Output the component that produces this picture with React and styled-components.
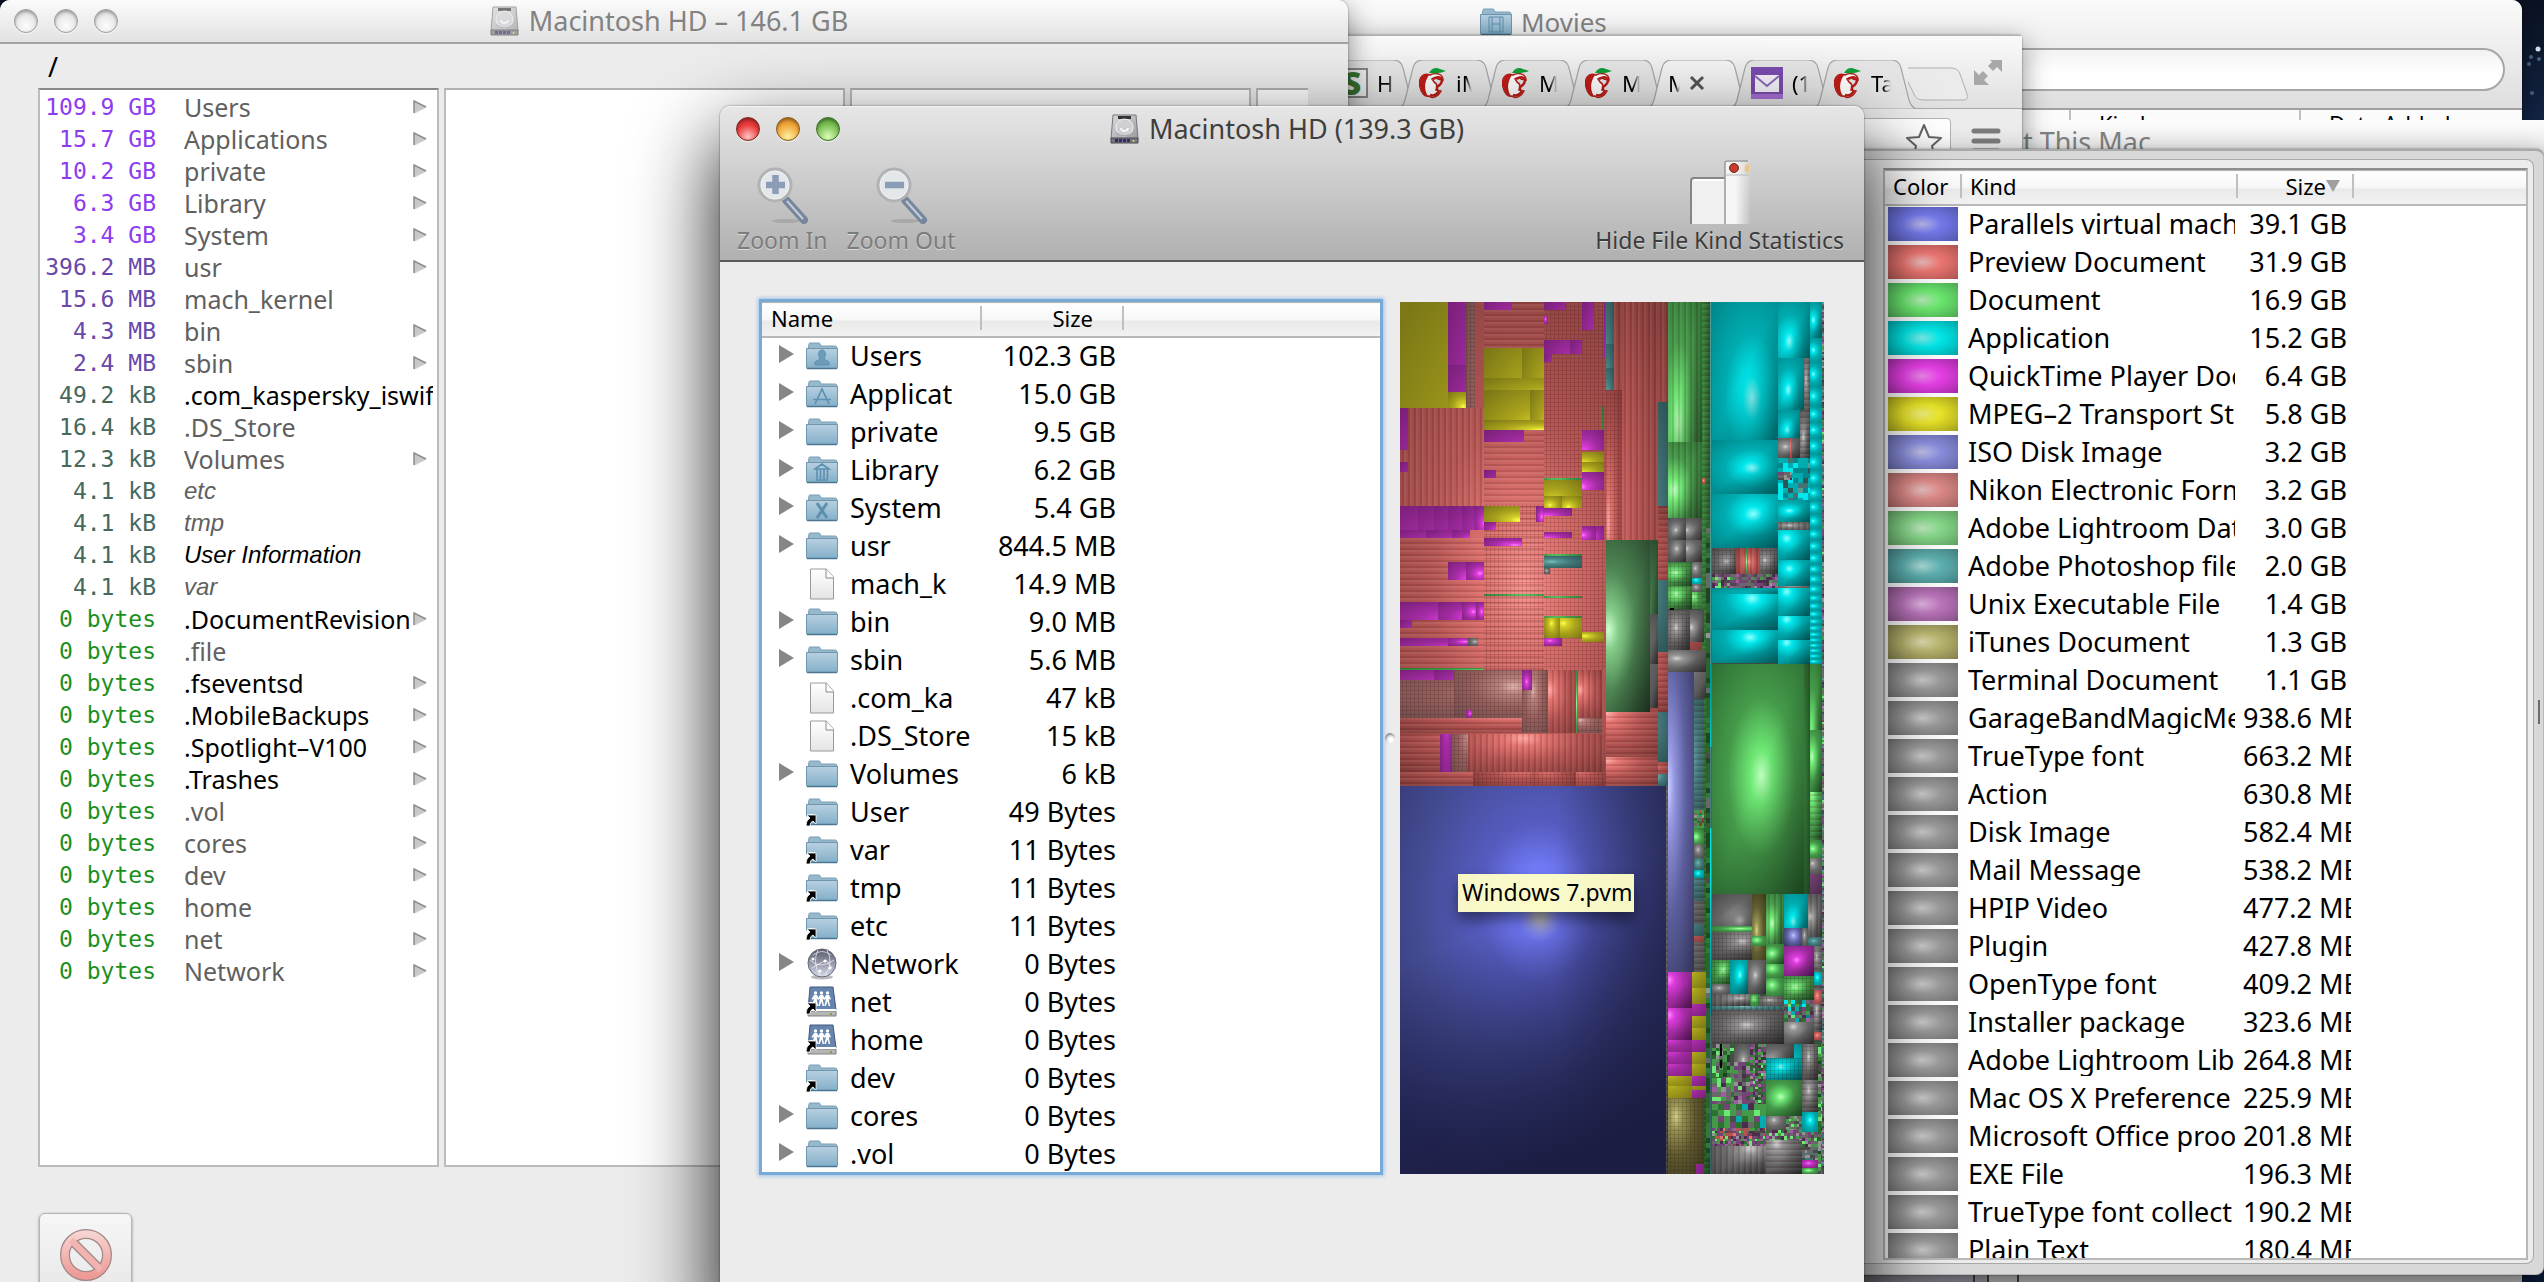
import React from "react";
import styled, { createGlobalStyle, css } from "styled-components";

const GlobalStyle = createGlobalStyle`
  * { box-sizing: border-box; }
  html, body { margin: 0; height: 100%; overflow: hidden; }
  body { font-family: "Noto Sans", "Open Sans", sans-serif; font-size: 24px; color: #000; }
  button, input { font: inherit; color: inherit; }
  button { border: 0; padding: 0; background: none; }
  svg { display: block; flex: none; }
`;

/* ---------- desktop and window frames ---------- */

const Desktop = styled.main`
  position: relative;
  height: 100vh;
  overflow: hidden;
  background: linear-gradient(#0a1222, #14284c 140px, #0c1c3c);
`;

const Stars = styled.svg`
  position: absolute;
  top: 0;
  right: 0;
`;

const Frame = styled.section`
  position: absolute;
  display: flex;
  flex-direction: column;
  border-radius: 10px 10px 0 0;
  background: #ececec;
  box-shadow: 0 8px 28px rgba(0, 0, 0, 0.45), 0 0 2px rgba(0, 0, 0, 0.5);
`;

const BrowserFrame = styled(Frame)`left: 0; top: 0; width: 1348px; height: 100%;`;
const MoviesFrame = styled(Frame)`left: 1200px; top: 0; width: 1322px; height: 100%; overflow: hidden;`;
const AboutFrame = styled(Frame)`left: 1700px; top: 120px; width: 900px; height: 900px; border-radius: 0; box-shadow: none;`;
const ChromeFrame = styled(Frame)`left: 1200px; top: 35px; width: 822px; height: 600px; border-radius: 4px; border-top: 1px solid #b4b4b4;`;
const DrawerFrame = styled(Frame)`
  left: 1840px;
  top: 149px;
  width: 704px;
  height: 1126px;
  padding: 8px 9px 10px 0;
  border-radius: 0 8px 8px 0;
  background: #d8d8d8;
  border: 1px solid #b8b8b8;
  border-top: 2px solid #a9a9a9;
`;
const MainFrame = styled(Frame)`
  left: 720px;
  top: 106px;
  width: 1144px;
  height: calc(100% - 66px);
  box-shadow: 0 34px 84px rgba(0, 0, 0, 0.95), 0 0 2px rgba(0, 0, 0, 0.6);
`;

const TitleBar = styled.header`
  display: flex;
  align-items: center;
  flex: none;
  height: 44px;
  padding: 0 ${(p) => (p.$active ? "16px" : "14px")};
  border-radius: 10px 10px 0 0;
  ${(p) => !p.$active && css`
    background: linear-gradient(#fbfbfb, #e2e2e2);
    border-bottom: 2px solid #a2a2a2;
  `}
`;

const Lights = styled.div`
  display: flex;
  gap: 16px;
  width: 120px;
`;

const Light = styled.button`
  width: 24px;
  height: 24px;
  border-radius: 50%;
  border: 1px solid ${(p) => p.$rim};
  background: ${(p) => p.$fill};
  box-shadow: inset 0 2px 3px rgba(0, 0, 0, 0.3), 0 1px 0 rgba(255, 255, 255, 0.6);
`;

const Title = styled.h1`
  display: flex;
  align-items: center;
  justify-content: center;
  gap: 10px;
  flex: 1;
  margin: 0 130px 0 0;
  font-size: 27px;
  line-height: 32px;
  font-weight: 400;
  white-space: pre;
  color: ${(p) => (p.$active ? "#3f3f3f" : "#828282")};
`;

/* ---------- column browser ---------- */

const PathLine = styled.div`
  padding: 7px 0 0 48px;
  height: 44px;
  line-height: 32px;
  font-size: 27px;
`;

const Columns = styled.div`
  display: flex;
  gap: 5px;
  width: 1270px;
  height: 1079px;
  margin-left: 38px;
  overflow: hidden;
  flex: none;
`;

const Column = styled.ul`
  flex: 0 0 401px;
  margin: 0;
  padding: 1px 0 0;
  list-style: none;
  background: #fff;
  border: 2px solid #bcbcbc;
  border-top-color: ${(p) => (p.$main ? "#8a8a8a" : "#b0b0b0")};
`;

const Entry = styled.li`
  display: grid;
  grid-template-columns: 116px 1fr 14px;
  column-gap: 28px;
  align-items: center;
  height: 32px;
  padding-right: 10px;
  line-height: 32px;
  white-space: nowrap;
`;

const EntrySize = styled.span`
  display: flex;
  justify-content: flex-end;
  font-family: "DejaVu Sans Mono", monospace;
  font-size: 23px;
  white-space: pre;
  color: ${(p) => ({ GB: "#8c3cf0", MB: "#6848a8", kB: "#44685c", bytes: "#1c901c" })[p.$unit]};
`;

const EntryName = styled.span`
  overflow: hidden;
  margin-right: ${(p) => (p.$wide ? "-48px" : "-26px")};
  font-size: 25px;
  color: ${(p) => (p.$dark ? "#000" : "#606060")};
  ${(p) => p.$link && css`
    font-family: "Liberation Sans", Arial, sans-serif;
    font-size: 24px;
    font-style: italic;
  `}
`;

const Footer = styled.div`
  padding: 46px 0 0 39px;
`;

const StopButton = styled.button`
  display: grid;
  justify-items: center;
  width: 93px;
  height: 90px;
  padding-top: 14px;
  border: 1px solid #b4b4b4;
  border-radius: 6px;
  background: linear-gradient(#f6f6f6, #e6e6e6);
  box-shadow: 0 1px 3px rgba(0, 0, 0, 0.4);
  align-items: start;
`;

/* ---------- main window ---------- */

const Chrome = styled.div`
  flex: none;
  height: 156px;
  border-radius: 10px 10px 0 0;
  border-top: 1px solid #f4f4f4;
  border-bottom: 2px solid #5a5a5a;
  background: linear-gradient(#e6e6e6, #b0b0b0);
`;

const ToolRow = styled.div`
  display: flex;
  align-items: flex-end;
  gap: 19px;
  padding: 9px 20px 0 17px;
`;

const Tool = styled.button`
  display: flex;
  flex-direction: column;
  align-items: center;
  gap: 3px;
  font-size: 23px;
  line-height: 26px;
  white-space: nowrap;
  color: ${(p) => (p.disabled ? "#7c7c7c" : "#3c3c3c")};
  text-shadow: 0 1px 0 rgba(255, 255, 255, 0.5);
  margin-left: ${(p) => (p.$end ? "auto" : "0")};
`;

const Body = styled.div`
  display: flex;
  padding: 40px 40px 0 42px;
`;

const TablePane = styled.div`
  flex: 1;
  min-width: 0;
  height: 870px;
  overflow: hidden;
  background: #fff;
  box-shadow: 0 0 0 3px #78aad8, 0 0 4px 4px #9cc2e6;
`;

const Splitter = styled.div`
  display: flex;
  align-items: center;
  justify-content: center;
  width: 20px;
`;

const Knob = styled.span`
  width: 10px;
  height: 10px;
  border-radius: 50%;
  background: #fff;
  box-shadow: inset 1px 2px 3px #888;
`;

const MapPane = styled.div`
  position: relative;
  width: 424px;
  height: 872px;
`;

const Tooltip = styled.div`
  position: absolute;
  left: 58px;
  top: 572px;
  width: 176px;
  height: 38px;
  padding-left: 4px;
  font-size: 23px;
  line-height: 36px;
  white-space: nowrap;
  background: rgba(255, 255, 200, 0.96);
  box-shadow: 0 8px 14px rgba(0, 0, 0, 0.45);
`;

const Table = styled.table`
  width: 100%;
  table-layout: fixed;
  border-collapse: collapse;
`;

const Head = styled.th`
  height: 34px;
  padding: 3px 0 0;
  vertical-align: top;
  font-size: 22px;
  line-height: 24px;
  font-weight: 400;
  text-align: left;
  background: linear-gradient(#fff 0, #f6f6f6 50%, #e9e9e9 52%, #f2f2f2);
  border-top: 1px solid #b4b4b4;
  border-bottom: 2px solid #b8b8b8;
`;

const HeadLabel = styled.span`
  display: flex;
  align-items: center;
  justify-content: ${(p) => (p.$end ? "flex-end" : "flex-start")};
  height: 24px;
  padding: ${(p) => p.$pad || "0"};
  border-right: ${(p) => (p.$last ? "0" : "2px solid #c0c0c0")};
`;

const Row = styled.tr`
  height: 38px;
`;

const Cell = styled.td`
  height: 38px;
  padding: ${(p) => p.$pad || "0"};
  overflow: hidden;
  white-space: nowrap;
  font-size: 27px;
  line-height: 32px;
  text-align: ${(p) => p.$align || "left"};
`;

const NameLine = styled.div`
  display: grid;
  grid-template-columns: 15px 32px 1fr;
  align-items: center;
  column-gap: 12px;
  padding-left: 17px;
`;

/* ---------- drawer ---------- */

const DrawerPanel = styled.div`
  flex: 1;
  min-height: 0;
  padding: 8px 5px 3px 42px;
  border: 1px solid #a8a8a8;
  border-left: 0;
  border-radius: 0 8px 8px 0;
  background: #ececec;
`;

const KindPane = styled.div`
  height: 100%;
  overflow: hidden;
  background: #fff;
  border: 2px solid #b8b8b8;
  border-top-color: #8e8e8e;
`;

const Swatch = styled.div`
  width: 70px;
  height: 34px;
  margin-left: 3px;
  background: radial-gradient(ellipse 60px 30px at 48% 50%, ${(p) => p.$c[0]}, ${(p) => p.$c[1]} 32%, ${(p) => p.$c[2]});
`;

const KindText = styled.div`
  margin: 0 3px 0 6px;
  overflow: hidden;
`;

const SizeText = styled.div`
  margin: 0 3px 0 5px;
  padding-right: 4px;
  overflow: hidden;
`;

const Grip = styled.span`
  position: absolute;
  right: 3px;
  top: 549px;
  width: 2px;
  height: 24px;
  background: #6c6c6c;
`;

/* ---------- background windows ---------- */

const FinderBar = styled.header`
  flex: none;
  height: 110px;
  background: linear-gradient(#fafafa, #dedede);
  border-bottom: 2px solid #a0a0a0;
`;

const FinderTitle = styled(Title)`
  justify-content: flex-start;
  gap: 9px;
  height: 48px;
  margin: 0;
  padding: 0 0 4px 280px;
  font-size: 26px;
`;

const SearchField = styled.input`
  display: block;
  width: 700px;
  height: 43px;
  margin-left: 605px;
  border: 2px solid #a6a6a6;
  border-radius: 22px;
  background: linear-gradient(#f2f2f2, #fff 60%);
`;

const FinderHeads = styled.div`
  display: grid;
  grid-template-columns: 869px 230px 1fr;
  height: 32px;
  background: #fbfbfb;
  font-size: 22px;
  line-height: 26px;
`;

const FinderHead = styled.span`
  padding-left: 28px;
  border-left: ${(p) => (p.$first ? "0" : "2px solid #c0c0c0")};
`;

const FinderBody = styled.div`
  display: grid;
  grid-template-columns: 775px 14px 30px 1fr;
  flex: 1;
  background: #b4b4b4;
`;

const FinderSide = styled.div`
  background: ${(p) => p.$tone};
  border-right: 2px solid #3c3c3c;
`;

const AboutTitle = styled(Title)`
  justify-content: flex-start;
  flex: none;
  height: 30px;
  margin: 0;
  padding: 14px 0 0 256px;
  background: linear-gradient(#fdfdfd, #ececec);
`;

const TabStrip = styled.div`
  display: flex;
  height: 73px;
  flex: none;
  padding: 24px 0 0 127px;
  background: linear-gradient(#fafafa, #e0e0e0);
  border-bottom: 1px solid #aaa;
`;

const Tab = styled.button`
  position: relative;
  display: flex;
  align-items: center;
  gap: 9px;
  flex: 0 0 83px;
  height: 49px;
  padding: 0 0 3px 9px;
  font-size: 22px;
`;

const TabShape = styled.svg`
  position: absolute;
  left: -12px;
  top: 0;
`;

const TabText = styled.span`
  position: relative;
  width: ${(p) => p.$w}px;
  overflow: hidden;
  white-space: nowrap;
  text-align: left;
  mask-image: linear-gradient(90deg, #000 60%, transparent);
`;

const Glyph = styled.span`
  position: relative;
`;

const SiteMark = styled.span`
  position: relative;
  display: grid;
  place-items: center;
  width: 32px;
  height: 30px;
  border: 2px solid #888;
  background: #f2f2f2;
  color: #3c7830;
  font-size: 32px;
  font-weight: 900;
  line-height: 26px;
`;

const UrlRow = styled.div`
  display: flex;
  align-items: center;
  gap: 20px;
  height: 56px;
  padding: 8px 20px 0 0;
  background: #ececec;
`;

const UrlBox = styled.div`
  display: flex;
  align-items: center;
  width: 751px;
  height: 46px;
  border: 1px solid #b4b4b4;
  border-radius: 4px;
  background: #fff;
  padding-right: 7px;
`;

const UrlInput = styled.input`
  flex: 1;
  border: 0;
  background: none;
`;

/* ---------- icons ---------- */

const DiskIcon = ({ faded }) => (
  <svg width="29" height="30" viewBox="0 0 29 30" opacity={faded ? 0.65 : 1}>
    <defs>
      <linearGradient id="metal" x1="0" y1="0" x2="1" y2="1">
        <stop offset="0" stopColor="#d8d8da" /><stop offset=".5" stopColor="#bcbcc0" /><stop offset="1" stopColor="#9a9a9e" />
      </linearGradient>
    </defs>
    <path d="M3 1h23l2 24H1z" fill="url(#metal)" stroke="#77777c" />
    <path d="M1 24h27v5H1z" fill="#77757f" stroke="#4b4a50" />
    <path d="M5 26.500h15" stroke="#302c68" strokeWidth="3" strokeDasharray="3 1" />
    <circle cx="23.500" cy="27" r="1" fill="#d8e040" />
    <path d="M8 3.500h13" stroke="#333" strokeWidth="3" />
    <circle cx="14.500" cy="13.500" r="8.500" fill="#cfcfd3" stroke="#f2f2f4" />
    <path d="M11 14a3.500 3 0 0 0 7 0" fill="none" stroke="#fff" strokeWidth="1.500" />
    <path d="M6 18c4 5 13 5 17 0" fill="none" stroke="#98989e" />
  </svg>
);

const StopIcon = () => (
  <svg width="54" height="54" viewBox="0 0 54 54">
    <defs>
      <linearGradient id="stop" x1="0" y1="0" x2="0" y2="1"><stop offset="0" stopColor="#f6d2d0" /><stop offset="1" stopColor="#ee9a96" /></linearGradient>
    </defs>
    <g fill="none">
      <circle cx="27" cy="27" r="21" stroke="#a08886" strokeWidth="10" />
      <path d="M12 12l30 30" stroke="#a08886" strokeWidth="9" />
      <circle cx="27" cy="27" r="21" stroke="url(#stop)" strokeWidth="7.500" />
      <path d="M12 12l30 30" stroke="#f2b4b0" strokeWidth="6.500" />
    </g>
  </svg>
);

const EntryArrow = () => (
  <svg width="14" height="14" viewBox="0 0 14 14"><path d="M13 7L1 13" stroke="#d8d8d8" strokeWidth="1.500" /><path d="M1 1v12L13 7z" fill="#c8c8c8" /><path d="M1 13V1l12 6" fill="none" stroke="#8c8c8c" strokeWidth="1.500" /></svg>
);

const Magnifier = ({ minus }) => (
  <svg width="56" height="58" viewBox="0 0 56 58">
    <ellipse cx="32" cy="55" rx="14" ry="2" fill="#a8a8a8" />
    <path d="M32 34L50 54" stroke="#76869c" strokeWidth="8" strokeLinecap="round" />
    <path d="M33 35L49 53" stroke="#c4ccd8" strokeWidth="2" />
    <circle cx="21" cy="19" r="16" fill="#f2f2f2" stroke="#b0b2b4" strokeWidth="3" />
    <circle cx="21" cy="19" r="13.500" fill="#e4e7ea" />
    <path d={minus ? "M12 19h19" : "M12 19h19M21.500 9v19"} stroke="#8b9cb6" strokeWidth="6.500" />
  </svg>
);

const PanelsIcon = () => (
  <svg width="62" height="64" viewBox="0 0 62 64">
    <defs>
      <linearGradient id="fade"><stop offset=".4" stopColor="#f6f6f6" /><stop offset="1" stopColor="#f6f6f6" stopOpacity="0" /></linearGradient>
    </defs>
    <path d="M2 19h34v45H2z" fill="#f0f0f0" />
    <path d="M2 64V21q0-3 3-3h31" fill="none" stroke="#858585" strokeWidth="2" />
    <path d="M5 20h31" stroke="#fff" strokeWidth="2" />
    <path d="M36 64V3q0-3 3-3h23v64z" fill="url(#fade)" />
    <path d="M36 64V3q0-2 3-2h20" fill="none" stroke="#989898" strokeWidth="1.500" />
    <path d="M36 15h24" stroke="#b8b8b8" />
    <circle cx="45" cy="8" r="4.500" fill="#c83c30" stroke="#702018" />
    <path d="M60 4a4.500 4.500 0 0 0 0 9" fill="#e8c890" />
  </svg>
);

const Badge = () => (
  <g><path d="M0 28V19q3-5 9-2v-1l-1 9-2-2q-3 1-4 5z" fill="#fff" /><path d="M0 28q0-6 4-8l-3-3h9v9l-3-3q-3 1-3 5z" fill="#000" stroke="#fff" strokeWidth=".8" /></g>
);

const RowIcon = ({ kind }) => {
  if (kind === "file") {
    return (
      <svg width="32" height="32" viewBox="0 0 32 32">
        <defs><linearGradient id="page" x1="0" y1="0" x2="0" y2="1"><stop offset="0" stopColor="#fff" /><stop offset="1" stopColor="#e4e4e4" /></linearGradient></defs>
        <path d="M4.500 1h16l7 8v22h-23z" fill="url(#page)" stroke="#9a9a9a" /><path d="M20 1v9h8" fill="#fff" stroke="#888" />
      </svg>
    );
  }
  if (kind === "globe") {
    return (
      <svg width="32" height="32" viewBox="0 0 32 32">
        <defs><linearGradient id="globe" x1="0" y1="0" x2="0" y2="1"><stop offset="0" stopColor="#55566a" /><stop offset="1" stopColor="#d6daea" /></linearGradient></defs>
        <ellipse cx="16" cy="29" rx="11" ry="2.500" fill="#bbb" />
        <circle cx="16" cy="15" r="14" fill="url(#globe)" stroke="#666878" />
        <path d="M7 7q9-7 18 0M4 12q10 10 24 0M12 2q-6 12 2 26M21 2q7 12-2 26M6 20l14-8 6 8" fill="none" stroke="#fff" opacity=".65" />
        <g fill="#fff"><circle cx="7" cy="11" r="1.500" /><circle cx="19" cy="13" r="1.500" /><circle cx="14" cy="23" r="1.500" /><circle cx="24" cy="20" r="1.500" /></g>
      </svg>
    );
  }
  if (kind === "server") {
    return (
      <svg width="32" height="32" viewBox="0 0 32 32">
        <path d="M4 1h23l3 23H2z" fill="#6684ae" stroke="#3e5880" /><path d="M2 25h28v5H2z" fill="#b6b6b6" stroke="#808080" /><path d="M2 24h28" stroke="#fff" strokeWidth="2" /><circle cx="25" cy="28" r="1" fill="#68a020" />
        <g fill="#fff">
          {[9.500, 15.500, 21.500].map((x) => (
            <g key={x}>
              <circle cx={x} cy="7" r="1.700" />
              <path d={`M${x - 1.500} 9h3l2 4-1 .800-1.200-1.500.200 2.700 1.200 5h-1.500L${x} 15.500l-1.700 4.500h-1.500l1.200-5 .200-2.700-1.200 1.500-1-.800z`} />
            </g>
          ))}
        </g>
        <Badge />
      </svg>
    );
  }
  const ink = { fill: "none", stroke: "#5d8fae", strokeWidth: 1.6 };
  return (
    <svg width="32" height="28" viewBox="0 0 32 28">
      <defs>
        <linearGradient id="folder" x1="0" y1="0" x2="0" y2="1"><stop offset="0" stopColor="#b8d0e0" /><stop offset="1" stopColor="#83afc9" /></linearGradient>
      </defs>
      <path d="M2 8L3 2q0-1 1-1h9q1 0 1 1l1 2h14q2 0 2 2v4H1z" fill="#96b9ce" stroke="#7b9eb4" />
      <path d="M.500 6.500h31v19q0 1-1 1h-29q-1 0-1-1z" fill="url(#folder)" stroke="#7096ae" />
      <path d="M1 26.500h30" stroke="#4a7692" strokeWidth="1.500" />
      {kind === "users" && <path d="M16 8c-3 0-4 3-3 6l1 3-5 3v3h14v-3l-5-3 1-3c1-3 0-6-3-6z" fill="#6c9cba" stroke="#5d8fae" />}
      {kind === "apps" && <path {...ink} d="M9 24l7-15 7 15M7 19.500h18" />}
      {kind === "library" && <path {...ink} d="M9 13l7-5 7 5zM10 24h12M11 13v10M14.500 13v10M18 13v10M21.500 13v10" />}
      {kind === "system" && <path {...ink} strokeWidth="3" d="M11 9l10 15M21 9L11 24" />}
      {kind === "movies" && <path {...ink} strokeWidth="1" d="M9 9h14v15H9zM12 9v15M20 9v15M12 16h8" />}
      {kind === "link" && <Badge />}
    </svg>
  );
};

const Disclosure = () => (
  <svg width="15" height="22" viewBox="0 0 15 22"><path d="M0 0v18L15 9z" fill="#868686" /></svg>
);

const AppleMark = () => (
  <svg width="28" height="32" viewBox="0 0 28 32">
    <path d="M11 8C3 5-1 12 1 20c1 6 5 10 9 9 3 3 9 1 12-5l-5-1q3-5-2-8l-2-3q5-3 6 0l5 1c0-6-7-8-13-5z" fill="#fff" stroke="#b81c18" strokeWidth="1.500" />
    <path d="M10 8C3 6 0 12 1 19c1 6 4 9 8 10-4-6-4-14 1-21z" fill="#c01c18" />
    <path d="M14 12q7-4 9 1 0 4-5 7v3" fill="none" stroke="#b81c18" strokeWidth="2.500" />
    <path d="M11 28q5 2 9-4" fill="none" stroke="#b81c18" strokeWidth="2.500" />
    <path d="M10 6q4-7 11-4l6 2q-7 3-15 2z" fill="#10a038" />
  </svg>
);

const MailMark = () => (
  <svg width="32" height="32" viewBox="0 0 32 32">
    <path d="M0 0h32v32H0z" fill="#7a4cae" /><path d="M0 27h32v5H0z" fill="#a870d8" />
    <path d="M4 8h24v17H4z" fill="#f6f4fa" /><path d="M4 9l12 10L28 9" fill="none" stroke="#8c68b8" strokeWidth="2" />
  </svg>
);

const TabBack = ({ active }) => (
  <TabShape width="108" height="49" viewBox="0 0 108 49">
    <path d="M0 49Q5 47 7 40L15 8q2-8 10-8h53q8 0 10 8l8 32q2 7 7 9z" fill={active ? "#f4f4f4" : "#e6e6e6"} stroke="#a8a8a8" strokeWidth="1.200" />
  </TabShape>
);

/* ---------- treemap ---------- */

const HUES = {
  red: ["#ffa8a4", "#e47470", "#b45452", "#823c3a"],
  mag: ["#ff84ff", "#dc3cdc", "#a42ca4", "#7c207c"],
  yel: ["#ffff50", "#d4d028", "#a8a21c", "#7c7816"],
  grn: ["#c0ffc0", "#6ee874", "#459a4a", "#2e7034"],
  sage: ["#d0ffd0", "#84cc88", "#4e8654", "#2e5032"],
  cyan: ["#90ffff", "#00e8ec", "#00acb0", "#00888c"],
  teal: ["#80c4c4", "#569a9a", "#427476", "#2e5456"],
  gry: ["#d4d4d4", "#949494", "#686868", "#4a4a4a"],
  rose: ["#e8b8b4", "#bc8480", "#96605e", "#74504e"],
  peri: ["#c8c8ff", "#9496e0", "#5e60a0", "#34365c"],
  kha: ["#d8d488", "#989454", "#605c30", "#3c3a1c"],
  pur: ["#d090d0", "#a05ca0", "#744474", "#4c2c4c"],
  dgn: ["#3c8840", "#347838", "#2c642e", "#1e4620"],
};

/* x, y, width, height, hue, highlight x, highlight y, texture */
const RED_BLOCK = [
  [30, 36, 144, 318, "yel", 500, 800], [174, 36, 54, 190, "mag", 300, 500], [174, 226, 54, 80, "mag", 300, 420], [174, 306, 54, 48, "yel", 220, 350],
  [228, 36, 30, 318, "rose", 290, 500, "g"], [30, 354, 24, 126, "mag", 200, 560], [30, 516, 24, 30, "mag", 100, 600],
  [282, 36, 84, 24, "mag", 390, 120], [282, 174, 114, 90, "yel", 460, 400], [396, 174, 66, 90, "yel", 480, 400], [282, 264, 180, 36, "yel", 480, 340],
  [282, 300, 138, 90, "yel", 460, 440], [420, 300, 42, 90, "yel", 480, 440], [282, 390, 180, 30, "yel", 450, 420],
  [282, 420, 120, 36, "mag", 440, 500], [282, 540, 36, 24, "mag", 350, 600],
  [462, 36, 66, 24, "mag", 560, 130], [462, 78, 12, 24, "mag"], [462, 150, 78, 42, "mag", 560, 260], [540, 150, 36, 42, "mag", 600, 260], [462, 192, 24, 24, "mag", 500, 260],
  [576, 36, 36, 84, "mag", 640, 200], [642, 36, 6, 168, "mag", 650, 330], [636, 348, 6, 70, "grn", 600, 500], [576, 420, 66, 60, "mag", 582, 490], [576, 486, 66, 30, "yel", 580, 520], [576, 516, 66, 30, "yel", 580, 550], [576, 546, 66, 54, "mag", 576, 590],
  [462, 564, 114, 6, "grn", 500, 567], [462, 570, 114, 48, "yel", 490, 650], [462, 618, 54, 36, "yel", 480, 645], [516, 618, 60, 36, "yel", 535, 650],
  [462, 654, 84, 24, "mag", 470, 680], [282, 648, 108, 48, "yel", 385, 690], [438, 648, 24, 48, "mag", 455, 680], [282, 696, 36, 24, "mag", 330, 720],
  [30, 648, 54, 72, "mag", 240, 760], [84, 648, 48, 72, "mag", 260, 760], [132, 648, 42, 72, "mag", 270, 760], [174, 648, 42, 72, "mag", 280, 760], [216, 648, 36, 72, "mag", 290, 740], [252, 648, 30, 72, "mag", 285, 700],
  [30, 720, 78, 24, "mag", 200, 760], [108, 720, 78, 24, "mag", 240, 760], [186, 720, 54, 24, "mag", 255, 750],
  [282, 744, 114, 24, "mag", 375, 765], [462, 726, 84, 18, "mag", 470, 745], [576, 708, 42, 42, "mag", 580, 735], [618, 708, 24, 42, "mag", 600, 740],
  [462, 792, 114, 6, "grn", 500, 795], [462, 798, 114, 36, "teal", 485, 815], [462, 834, 18, 18, "gry", 470, 842], [174, 816, 54, 54, "mag", 240, 870], [228, 816, 54, 54, "mag", 270, 850],
  [282, 912, 180, 6, "grn", 400, 915], [462, 918, 114, 6, "grn", 500, 921],
  [30, 936, 114, 54, "mag", 220, 990], [144, 936, 72, 54, "mag", 260, 980], [216, 936, 42, 54, "mag", 250, 965], [258, 936, 24, 54, "mag", 275, 965], [30, 990, 36, 24, "mag", 100, 1040],
  [462, 978, 114, 6, "grn", 500, 981], [462, 984, 48, 60, "yel", 485, 1000], [510, 984, 66, 60, "yel", 520, 1000], [576, 1026, 66, 30, "yel", 584, 1038], [462, 1044, 54, 24, "mag", 480, 1052],
  [30, 1044, 144, 24, "mag", 220, 1080], [174, 1044, 60, 24, "mag", 225, 1055], [234, 1044, 30, 24, "gry", 255, 1055], [30, 1134, 252, 5, "grn", 400, 1140],
  [30, 1170, 162, 114, "rose", 400, 1210, "g"], [192, 1140, 204, 144, "rose", 370, 1190, "g"], [30, 1140, 102, 30, "mag", 220, 1180], [132, 1140, 60, 30, "mag", 230, 1190],
  [396, 1140, 78, 190, "rose", 430, 1200, "g"], [396, 1140, 30, 60, "mag", 410, 1175], [474, 1140, 84, 190, "red", 480, 1200, "v"], [558, 1140, 6, 190, "grn", 560, 1240],
  [564, 1140, 72, 144, "red", 570, 1200, "v"], [564, 1284, 72, 46, "rose", 570, 1290, "g"], [30, 1284, 366, 46, "red", 380, 1270, "h"], [228, 1260, 18, 24, "mag", 240, 1270],
  [234, 1332, 410, 113, "red", 400, 1345, "v"], [30, 1332, 120, 113, "red", 300, 1300, "h"], [150, 1332, 36, 114, "mag", 170, 1200], [186, 1332, 48, 114, "rose", 240, 1340, "g"],
  [30, 1446, 220, 41, "red", 350, 1420, "h"], [250, 1446, 176, 41, "red", 390, 1430, "g"], [426, 1446, 132, 41, "red", 470, 1430, "g"], [558, 1446, 90, 41, "red", 570, 1430, "g"],
  [648, 300, 48, 450, "red", 655, 700, "g"], [696, 36, 108, 714, "red", 600, 700, "v"], [672, 36, 24, 264, "red", 600, 500, "v"],
  [648, 36, 24, 126, "teal", 650, 300], [648, 162, 24, 72, "teal", 650, 300], [648, 234, 24, 66, "teal", 650, 330],
  [648, 750, 132, 516, "sage", 656, 1020], [780, 750, 24, 222, "sage", 640, 1000], [780, 972, 24, 150, "gry", 700, 1040], [780, 1122, 24, 132, "gry", 700, 1100],
  [648, 1266, 156, 135, "red", 650, 1270, "h"], [648, 1401, 156, 86, "red", 650, 1410, "h"],
  [804, 36, 30, 300, "red", 700, 700, "v"], [804, 336, 30, 312, "teal", 760, 700], [804, 648, 30, 222, "red", 720, 800, "h"], [804, 870, 30, 216, "teal", 760, 900], [804, 1086, 30, 180, "red", 740, 1120, "h"], [804, 1266, 30, 150, "teal", 760, 1300], [804, 1416, 30, 36, "red", 780, 1430, "h"], [804, 1452, 30, 35, "teal", 800, 1460],
];

const RIGHT_BLOCK = [
  [936, 36, 24, 2616, "dgn", 940, 400, "h"], [828, 1488, 6, 1164, "gry", 800, 1700, "h"], [834, 36, 102, 420, "grn", 866, 400, "v"], [834, 456, 102, 228, "grn", 852, 600, "v"],
  [834, 684, 54, 66, "gry", 858, 720], [888, 684, 48, 66, "gry", 888, 720], [834, 750, 54, 66, "gry", 860, 776], [888, 750, 48, 66, "gry", 888, 776],
  [834, 816, 72, 72, "grn", 856, 848, "g"], [834, 888, 72, 68, "grn", 858, 912, "g"], [906, 816, 30, 48, "gry", 916, 835], [906, 864, 30, 18, "cyan", 918, 870], [906, 882, 30, 24, "gry"], [906, 906, 30, 50, "grn", 912, 920, "g"],
  [834, 960, 66, 120, "gry", 858, 1012, "g"], [900, 960, 42, 96, "gry", 904, 1012], [840, 954, 12, 6, "blk"], [900, 1056, 36, 24, "red", 860, 1000], [834, 1080, 114, 66, "gry", 860, 1105],
  [936, 564, 12, 18, "red"], [834, 1146, 78, 900, "peri", 836, 1490], [912, 1146, 42, 78, "gry", 890, 1100], [912, 1224, 30, 336, "teal", 900, 1400, "h"], [912, 1662, 30, 42, "gry"], [912, 1704, 30, 36, "teal"], [912, 1740, 30, 24, "cyan"], [912, 1764, 30, 70, "teal", 890, 1740, "h"], [912, 1834, 30, 68, "gry", 880, 1780, "h"],
  [912, 1614, 30, 48, "grn", 918, 1640], [912, 1902, 30, 36, "teal", 890, 1880], [912, 1938, 30, 18, "red", 890, 1920], [912, 1956, 30, 90, "gry", 880, 1880, "h"],
  [834, 2046, 72, 108, "mag", 838, 2070], [834, 2154, 72, 96, "mag", 838, 2175], [834, 2250, 72, 36, "mag", 838, 2235], [834, 2286, 72, 36, "mag", 838, 2270], [834, 2322, 72, 36, "mag", 838, 2300], [834, 2358, 72, 30, "yel", 838, 2330], [834, 2388, 72, 36, "yel", 838, 2350],
  ...[[2046, 48, "yel"], [2094, 48, "yel"], [2142, 36, "mag"], [2178, 36, "yel"], [2214, 36, "yel"], [2250, 36, "mag"], [2286, 36, "yel"], [2322, 36, "yel"], [2358, 30, "mag"], [2388, 12, "yel"], [2400, 24, "mag"]].map(([y, h, c]) => [906, y, 42, h, c, 880, y - 20]),
  [834, 2424, 108, 228, "kha", 858, 2480, "g"], [918, 2622, 24, 30, "mag", 880, 2560],
  [960, 36, 6, 2616, "teal", 960, 300], [960, 1122, 6, 250, "cyan", 960, 1500], [960, 1614, 6, 560, "cyan", 960, 1700],
  [966, 36, 198, 414, "cyan", 1086, 325], [966, 450, 198, 162, "cyan", 1086, 534], [966, 612, 198, 162, "cyan", 1090, 672],
  [966, 774, 72, 78, "gry", 1010, 815, "g"], [1038, 774, 72, 78, "red", 1074, 815, "v"], [1068, 774, 6, 78, "grn", 1070, 815], [1110, 774, 54, 78, "gry", 1125, 810, "g"], [966, 894, 198, 18, "cyan", 1086, 920],
  [966, 912, 198, 108, "cyan", 1086, 925], [966, 1020, 198, 100, "cyan", 1080, 1042],
  [1164, 36, 96, 168, "cyan", 1198, 155], [1164, 204, 78, 156, "cyan", 1195, 300], [1242, 204, 18, 156, "gry", 1248, 270, "h"], [1164, 360, 66, 84, "cyan", 1192, 420], [1230, 360, 30, 144, "gry", 1240, 440, "h"], [1164, 444, 66, 60, "gry", 1186, 470], [1200, 444, 6, 60, "red"],
  [1164, 630, 96, 66, "cyan", 1198, 662], [1164, 696, 96, 24, "gry", 1198, 706, "v"], [1164, 720, 96, 90, "cyan", 1190, 745], [1164, 810, 96, 78, "cyan", 1198, 836], [1164, 888, 96, 6, "gry"], [1164, 894, 96, 84, "cyan", 1190, 905], [1164, 978, 96, 72, "cyan", 1190, 988], [1164, 1050, 96, 72, "cyan", 1190, 1058],
  ...[[36, 108], [144, 72], [216, 72], [288, 60], [348, 48], [396, 48], [444, 48], [492, 48], [540, 48], [588, 42], [630, 42], [672, 42], [714, 36], [750, 36], [786, 36], [822, 30], [852, 30], [882, 30], [912, 24], [936, 24], [960, 24], [984, 20], [1004, 20], [1024, 18], [1042, 16], [1058, 16], [1074, 16], [1090, 16], [1106, 16]].map(([y, h]) => [1260, y, 36, h, "cyan", 1270, y + h / 2]),
  [966, 1122, 276, 690, "grn", 1115, 1460], [1242, 1122, 18, 690, "dgn", 1240, 1400], [1260, 1122, 36, 198, "grn", 1266, 1350], [1260, 1320, 36, 186, "grn", 1266, 1400], [1260, 1506, 36, 144, "grn", 1266, 1500, "h"], [1260, 1650, 36, 54, "grn", 1268, 1676], [1260, 1704, 36, 48, "gry", 1268, 1720], [1260, 1752, 36, 60, "pur", 1230, 1700],
  [966, 1812, 120, 96, "gry", 1050, 1892], [966, 1908, 120, 18, "grn", 1050, 1916], [966, 1926, 120, 84, "gry", 1058, 1955, "g"], [1086, 1812, 42, 198, "kha", 1100, 1920], [1086, 1938, 42, 30, "grn", 1100, 1950], [1128, 1812, 54, 150, "grn", 1146, 1900, "v"], [1128, 1962, 54, 60, "grn", 1146, 1990], [1128, 2022, 54, 42, "grn", 1146, 2035],
  [1182, 1812, 72, 102, "cyan", 1210, 1895], [1182, 1914, 54, 54, "peri", 1210, 1936], [1236, 1914, 18, 54, "gry"], [1254, 1812, 42, 130, "gry", 1262, 1880, "v"], [1254, 1942, 42, 26, "teal"], [1182, 1968, 90, 90, "mag", 1220, 2010], [1272, 1968, 24, 78, "gry", 1280, 2000, "h"], [1182, 2058, 90, 72, "grn", 1215, 2090, "g"], [1182, 2196, 90, 66, "gry", 1210, 2210],
  [1272, 2046, 24, 40, "cyan"], [1272, 2086, 24, 140, "gry", 1280, 2160, "h"], [1272, 2100, 24, 42, "red"], [1272, 2226, 24, 24, "red"],
  [966, 2010, 54, 72, "grn", 1000, 2040, "g"], [1020, 2010, 54, 102, "cyan", 1050, 2055], [1074, 2010, 54, 102, "gry", 1096, 2055], [1128, 2064, 54, 54, "grn", 1146, 2085], [966, 2082, 54, 30, "gry"], [966, 2112, 114, 36, "gry", 1050, 2125, "v"], [1080, 2112, 30, 36, "grn", 0, 0, "g"], [1110, 2118, 72, 30, "gry", 0, 0, "g"], [966, 2148, 216, 12, "teal", 1060, 2150, "v"], [966, 2160, 216, 102, "gry", 1070, 2205, "g"],
  [1032, 2262, 48, 54, "gry", 1060, 2310], [1128, 2262, 84, 42, "gry", 1150, 2310], [1212, 2262, 24, 42, "cyan", 1190, 2310], [1128, 2304, 108, 66, "cyan", 1172, 2330, "g"], [1128, 2370, 108, 108, "grn", 1172, 2420], [1128, 2478, 60, 42, "gry", 1152, 2490], [1128, 2550, 108, 102, "gry", 1160, 2560, "h"], [966, 2568, 162, 84, "gry", 1080, 2575, "v"],
  [1236, 2262, 48, 108, "gry", 1256, 2300, "g"], [1236, 2370, 48, 96, "gry", 1256, 2400, "h"], [1236, 2466, 48, 60, "cyan", 1260, 2490], [1236, 2610, 48, 24, "mag"], [1236, 2634, 48, 18, "grn"],
];

/* areas crowded with very small files: x, y, width, height, step, hues */
const CROWDED = [
  [966, 852, 198, 42, 9, ["pur", "gry", "grn", "pur", "gry"]],
  [1164, 504, 96, 126, 15, ["cyan", "cyan", "cyan", "cyan", "cyan", "cyan", "teal"]],
  [1164, 546, 42, 24, 9, ["pur", "gry"]],
  [1296, 36, 6, 2616, 6, ["gry", "grn", "pur", "gry", "teal"]],
  [948, 700, 12, 1900, 15, ["dgn", "dgn", "dgn", "gry", "dgn", "dgn"]],
  [912, 1560, 30, 54, 8, ["grn", "gry", "red", "grn"]],
  [1182, 2130, 90, 66, 11, ["pur", "cyan", "grn", "gry", "gry"]],
  [966, 2262, 66, 102, 11, ["grn", "grn", "dgn", "gry"]],
  [1032, 2316, 48, 90, 12, ["pur", "gry", "grn", "pur"]],
  [1080, 2262, 48, 180, 8, ["pur", "grn", "gry", "pur", "dgn"]],
  [966, 2364, 66, 78, 14, ["grn", "grn", "gry", "pur"]],
  [1032, 2406, 48, 36, 12, ["pur", "gry", "pur"]],
  [966, 2442, 162, 72, 18, ["grn", "gry", "pur", "grn", "grn", "pur", "cyan"]],
  [966, 2514, 162, 54, 8, ["pur", "pur", "grn", "gry", "red"]],
  [1188, 2478, 48, 42, 8, ["gry", "grn", "gry"]],
  [1128, 2520, 108, 30, 9, ["grn", "grn", "gry", "pur"]],
  [1236, 2526, 48, 46, 9, ["pur", "pur", "gry", "grn"]],
  [1236, 2572, 48, 38, 8, ["gry", "gry", "teal"]],
  [1284, 2262, 12, 390, 10, ["grn", "gry", "grn", "dgn"]],
];

const crowd = () => {
  let seed = 7;
  const next = () => {
    seed = (seed * 16807) % 2147483647;
    return seed / 2147483647;
  };
  const out = [];
  CROWDED.forEach(([x, y, w, h, step, hues]) => {
    for (let j = 0; j < h; j += step) {
      for (let i = 0; i < w; i += step) {
        const hue = HUES[hues[Math.floor(next() * hues.length)]];
        const shade = next();
        out.push([x + i, y + j, Math.min(step, w - i), Math.min(step, h - j), hue[shade < 0.2 ? 1 : shade < 0.75 ? 2 : 3]]);
      }
    }
  });
  return out;
};
const CROWD = crowd();

const MapCell = ({ id, cell }) => {
  const [x, y, w, h, hue, hx, hy, tex] = cell;
  if (hue === "blk") return <rect x={x} y={y} width={w} height={h} fill="#000" />;
  const cx = hx || x + w * 0.4;
  const cy = hy || y + h * 0.4;
  const dx = Math.max(Math.abs(cx - x), Math.abs(x + w - cx)) * 1.35;
  const dy = Math.max(Math.abs(cy - y), Math.abs(y + h - cy)) * 1.35;
  const c = HUES[hue];
  const shaded = ["grn", "cyan", "gry", "sage", "mag"].includes(hue) && w * h > 3000 && x > 640;
  return (
    <g>
      <radialGradient id={id} gradientUnits="userSpaceOnUse" cx="0" cy="0" r="1" gradientTransform={`translate(${cx} ${cy}) scale(${dx} ${dy})`}>
        <stop offset="0" stopColor={c[0]} /><stop offset=".17" stopColor={c[1]} /><stop offset=".5" stopColor={c[2]} /><stop offset="1" stopColor={c[3]} />
      </radialGradient>
      <rect x={x} y={y} width={w} height={h} fill={`url(#${id})`} />
      {shaded && <rect x={x} y={y} width={w} height={h} fill="url(#cell-shade)" />}
      {tex && <rect x={x} y={y} width={w} height={h} fill={`url(#tex-${tex})`} />}
    </g>
  );
};

const Treemap = () => (
  <svg width="424" height="872" viewBox="30 36 1272 2616" shapeRendering="crispEdges" role="img" aria-label="Disk usage map">
    <defs>
      <linearGradient id="cell-shade" x1="0" y1="0" x2="1" y2="1"><stop offset=".5" stopColor="#000" stopOpacity="0" /><stop offset="1" stopColor="#000" stopOpacity=".42" /></linearGradient>
      <pattern id="tex-v" width="18" height="40" patternUnits="userSpaceOnUse"><path d="M0 0h6v40H0z" fill="#300" opacity=".13" /><path d="M6 0h6v40H6z" fill="#fff" opacity=".05" /></pattern>
      <pattern id="tex-h" width="40" height="18" patternUnits="userSpaceOnUse"><path d="M0 0h40v6H0z" fill="#300" opacity=".13" /><path d="M0 6h40v6H0z" fill="#fff" opacity=".05" /></pattern>
      <pattern id="tex-g" width="12" height="12" patternUnits="userSpaceOnUse"><path d="M0 0h12v3H0zM0 0h3v12H0z" fill="#200" opacity=".16" /></pattern>
      <radialGradient id="red-base" gradientUnits="userSpaceOnUse" cx="0" cy="0" r="1" gradientTransform="translate(400 880) scale(460 860)">
        <stop offset="0" stopColor="#fc9490" /><stop offset=".25" stopColor="#e07470" /><stop offset=".6" stopColor="#b45654" /><stop offset="1" stopColor="#964846" />
      </radialGradient>
      <radialGradient id="vm" gradientUnits="userSpaceOnUse" cx="0" cy="0" r="1" gradientTransform="translate(445 1840) scale(620 860)">
        <stop offset="0" stopColor="#8088ff" /><stop offset=".12" stopColor="#727af8" /><stop offset=".28" stopColor="#565cc0" /><stop offset=".6" stopColor="#434a90" /><stop offset="1" stopColor="#2c3066" />
      </radialGradient>
      <linearGradient id="vm-shade" gradientUnits="userSpaceOnUse" x1="360" y1="1880" x2="660" y2="2540">
        <stop offset="0" stopColor="#14163a" stopOpacity="0" /><stop offset="1" stopColor="#191b3e" stopOpacity=".9" />
      </linearGradient>
      <linearGradient id="vm-side" gradientUnits="userSpaceOnUse" x1="500" y1="0" x2="828" y2="0">
        <stop offset="0" stopColor="#1c1e42" stopOpacity="0" /><stop offset="1" stopColor="#1c1e42" stopOpacity=".6" />
      </linearGradient>
      <radialGradient id="vm-spot"><stop offset=".2" stopColor="#b0b0b0" stopOpacity=".9" /><stop offset="1" stopColor="#8c90e0" stopOpacity="0" /></radialGradient>
    </defs>
    <rect x="30" y="36" width="1272" height="2616" fill="#3c4c3e" />
    <rect x="30" y="36" width="804" height="1451" fill="url(#red-base)" />
    <rect x="30" y="354" width="252" height="294" fill="url(#tex-v)" />
    <rect x="30" y="744" width="252" height="390" fill="url(#tex-h)" />
    <rect x="282" y="36" width="180" height="1104" fill="url(#tex-h)" />
    <rect x="282" y="640" width="180" height="500" fill="url(#tex-g)" />
    <rect x="462" y="36" width="186" height="1104" fill="url(#tex-g)" />
    {RED_BLOCK.map((c, i) => <MapCell key={i} id={`r${i}`} cell={c} />)}
    <rect x="30" y="1488" width="798" height="1164" fill="url(#vm)" />
    <rect x="30" y="1488" width="798" height="1164" fill="url(#vm-shade)" />
    <rect x="30" y="1488" width="798" height="1164" fill="url(#vm-side)" />
    <ellipse cx="450" cy="1880" rx="66" ry="76" fill="url(#vm-spot)" />
    {RIGHT_BLOCK.map((c, i) => <MapCell key={i} id={`b${i}`} cell={c} />)}
    {CROWD.map(([x, y, w, h, fill], i) => <rect key={i} x={x} y={y} width={w} height={h} fill={fill} />)}
    <path d="M990 2262h6v36h-6zM990 2310h6v24h-6z" fill="#000" />
  </svg>
);

/* ---------- data ---------- */

const ENTRIES = [
  ["109.9 GB", "Users", "a"], ["15.7 GB", "Applications", "a"], ["10.2 GB", "private", "a"], ["6.3 GB", "Library", "a"], ["3.4 GB", "System", "a"],
  ["396.2 MB", "usr", "a"], ["15.6 MB", "mach_kernel", ""], ["4.3 MB", "bin", "a"], ["2.4 MB", "sbin", "a"],
  ["49.2 kB", ".com_kaspersky_iswif", "d"], ["16.4 kB", ".DS_Store", ""], ["12.3 kB", "Volumes", "a"],
  ["4.1 kB", "etc", "i"], ["4.1 kB", "tmp", "i"], ["4.1 kB", "User Information", "id"], ["4.1 kB", "var", "i"],
  ["0 bytes", ".DocumentRevision", "ad"], ["0 bytes", ".file", ""], ["0 bytes", ".fseventsd", "ad"], ["0 bytes", ".MobileBackups", "ad"],
  ["0 bytes", ".Spotlight–V100", "ad"], ["0 bytes", ".Trashes", "ad"], ["0 bytes", ".vol", "a"], ["0 bytes", "cores", "a"],
  ["0 bytes", "dev", "a"], ["0 bytes", "home", "a"], ["0 bytes", "net", "a"], ["0 bytes", "Network", "a"],
];

const FILES = [
  ["Users", "102.3 GB", "users", 1], ["Applicat", "15.0 GB", "apps", 1], ["private", "9.5 GB", "folder", 1], ["Library", "6.2 GB", "library", 1],
  ["System", "5.4 GB", "system", 1], ["usr", "844.5 MB", "folder", 1], ["mach_k", "14.9 MB", "file"], ["bin", "9.0 MB", "folder", 1],
  ["sbin", "5.6 MB", "folder", 1], [".com_ka", "47 kB", "file"], [".DS_Store", "15 kB", "file"], ["Volumes", "6 kB", "folder", 1],
  ["User", "49 Bytes", "link"], ["var", "11 Bytes", "link"], ["tmp", "11 Bytes", "link"], ["etc", "11 Bytes", "link"],
  ["Network", "0 Bytes", "globe", 1], ["net", "0 Bytes", "server"], ["home", "0 Bytes", "server"], ["dev", "0 Bytes", "link"],
  ["cores", "0 Bytes", "folder", 1], [".vol", "0 Bytes", "folder", 1],
];

const GREY = ["#cfcfcf", "#9c9c9c", "#626262"];
const KINDS = [
  ["Parallels virtual mach", "39.1 GB", ["#bcbcf0", "#767cf0", "#484c98"]],
  ["Preview Document", "31.9 GB", ["#f0c0c0", "#f07874", "#964844"]],
  ["Document", "16.9 GB", ["#bcf0bc", "#6cec70", "#449048"]],
  ["Application", "15.2 GB", ["#80f4f0", "#00ecec", "#008c90"]],
  ["QuickTime Player Doc", "6.4 GB", ["#f08cf0", "#ec40ec", "#8a248c"]],
  ["MPEG–2 Transport St", "5.8 GB", ["#f6f480", "#ece828", "#8a8618"]],
  ["ISO Disk Image", "3.2 GB", ["#c4c4ec", "#8c90e0", "#54568e"]],
  ["Nikon Electronic Form", "3.2 GB", ["#ecc4c4", "#e08c8a", "#8e5654"]],
  ["Adobe Lightroom Dat", "3.0 GB", ["#c4ecc4", "#88dc8c", "#548a56"]],
  ["Adobe Photoshop file", "2.0 GB", ["#b0e0de", "#60b4b4", "#386e70"]],
  ["Unix Executable File", "1.4 GB", ["#e4b8e4", "#c078c0", "#704472"]],
  ["iTunes Document", "1.3 GB", ["#e2e0b4", "#bcb870", "#706c40"]],
  ["Terminal Document", "1.1 GB", GREY], ["GarageBandMagicMen", "938.6 MB", GREY], ["TrueType font", "663.2 MB", GREY],
  ["Action", "630.8 MB", GREY], ["Disk Image", "582.4 MB", GREY], ["Mail Message", "538.2 MB", GREY], ["HPIP Video", "477.2 MB", GREY],
  ["Plugin", "427.8 MB", GREY], ["OpenType font", "409.2 MB", GREY], ["Installer package", "323.6 MB", GREY],
  ["Adobe Lightroom Lib", "264.8 MB", GREY], ["Mac OS X Preference", "225.9 MB", GREY], ["Microsoft Office proo", "201.8 MB", GREY],
  ["EXE File", "196.3 MB", GREY], ["TrueType font collect", "190.2 MB", GREY], ["Plain Text", "180.4 MB", GREY],
];

const CLEAR = "radial-gradient(circle at 50% 70%, #fdfdfd, #d4d4d4)";
const ACTIVE = [
  ["Close", "radial-gradient(circle at 50% 85%, #ffc4c0, #e83c3c 55%, #c02828)", "#7c2420"],
  ["Minimize", "radial-gradient(circle at 50% 85%, #fff0a0, #f0a83c 55%, #c87820)", "#855a18"],
  ["Zoom", "radial-gradient(circle at 50% 85%, #d8ffb8, #7cc054 55%, #4c9430)", "#3c6c24"],
];

/* ---------- windows ---------- */

const WindowLights = ({ active }) => (
  <Lights>
    {ACTIVE.map(([name, fill, rim]) => (
      <Light key={name} aria-label={name} $fill={active ? fill : CLEAR} $rim={active ? rim : "#9c9c9c"} />
    ))}
  </Lights>
);

const ColumnBrowser = () => (
  <BrowserFrame>
    <TitleBar>
      <WindowLights />
      <Title><DiskIcon faded />Macintosh HD – 146.1 GB</Title>
    </TitleBar>
    <div>
      <PathLine>/</PathLine>
      <Columns>
        <Column $main>
          {ENTRIES.map(([size, name, flags]) => (
            <Entry key={name}>
              <EntrySize $unit={size.split(" ")[1]}>{size}</EntrySize>
              <EntryName $dark={flags.includes("d")} $link={flags.includes("i")} $wide={!flags.includes("a")}>{name}</EntryName>
              {flags.includes("a") && <EntryArrow />}
            </Entry>
          ))}
        </Column>
        <Column /><Column /><Column />
      </Columns>
      <Footer><StopButton aria-label="Delete"><StopIcon /></StopButton></Footer>
    </div>
  </BrowserFrame>
);

const InventoryWindow = () => (
  <MainFrame>
    <Chrome>
      <TitleBar $active>
        <WindowLights active />
        <Title $active><DiskIcon />Macintosh HD (139.3 GB)</Title>
      </TitleBar>
      <ToolRow>
        <Tool disabled><Magnifier />Zoom In</Tool>
        <Tool disabled><Magnifier minus />Zoom Out</Tool>
        <Tool $end><PanelsIcon />Hide File Kind Statistics</Tool>
      </ToolRow>
    </Chrome>
    <Body>
      <TablePane>
        <Table>
          <colgroup><col width="220" /><col width="142" /><col /></colgroup>
          <thead>
            <tr>
              <Head><HeadLabel $pad="0 0 0 9px">Name</HeadLabel></Head>
              <Head><HeadLabel $end $pad="0 29px 0 0">Size</HeadLabel></Head>
              <Head><HeadLabel $last /></Head>
            </tr>
          </thead>
          <tbody>
            {FILES.map(([name, size, icon, open]) => (
              <Row key={name}>
                <Cell><NameLine>{open ? <Disclosure /> : <span />}<RowIcon kind={icon} /><span>{name}</span></NameLine></Cell>
                <Cell $align="right" $pad="0 8px 0 0">{size}</Cell>
                <Cell />
              </Row>
            ))}
          </tbody>
        </Table>
      </TablePane>
      <Splitter><Knob /></Splitter>
      <MapPane><Treemap /><Tooltip role="tooltip">Windows 7.pvm</Tooltip></MapPane>
    </Body>
  </MainFrame>
);

const KindDrawer = () => (
  <DrawerFrame>
    <DrawerPanel>
      <KindPane>
        <Table>
          <colgroup><col width="77" /><col width="276" /><col width="116" /><col /></colgroup>
          <thead>
            <tr>
              <Head><HeadLabel $pad="0 0 0 8px">Color</HeadLabel></Head>
              <Head><HeadLabel $pad="0 0 0 8px">Kind</HeadLabel></Head>
              <Head><HeadLabel $end $pad="0 12px 0 0">Size<svg width="14" height="12" viewBox="0 0 14 12"><path d="M0 0h14L7 12z" fill="#a0a0a0" /></svg></HeadLabel></Head>
              <Head><HeadLabel $last /></Head>
            </tr>
          </thead>
          <tbody>
            {KINDS.map(([kind, size, colors]) => (
              <Row key={kind}>
                <Cell><Swatch $c={colors} /></Cell>
                <Cell><KindText>{kind}</KindText></Cell>
                <Cell $align="right"><SizeText>{size}</SizeText></Cell>
                <Cell />
              </Row>
            ))}
          </tbody>
        </Table>
      </KindPane>
    </DrawerPanel>
    <Grip />
  </DrawerFrame>
);

const MoviesWindow = () => (
  <MoviesFrame>
    <FinderBar>
      <FinderTitle><RowIcon kind="movies" />Movies</FinderTitle>
      <SearchField aria-label="Search" />
    </FinderBar>
    <FinderHeads><FinderHead $first /><FinderHead>Kind</FinderHead><FinderHead>Date Added</FinderHead></FinderHeads>
    <FinderBody><FinderSide $tone="#8e909a" /><FinderSide $tone="#8e909a" /><FinderSide $tone="#b0b0b0" /></FinderBody>
  </MoviesFrame>
);

const TABS = [["apple", "iM", 16], ["apple", "M", 18], ["apple", "M", 18], ["active", "M", 12], ["mail", "(1", 16], ["apple", "Ta", 20]];

const ChromeWindow = () => (
  <ChromeFrame>
    <TabStrip>
      <Tab><TabBack /><SiteMark>S</SiteMark><TabText $w={18}>H</TabText></Tab>
      {TABS.map(([mark, text, w], i) => (
        <Tab key={i}>
          <TabBack active={mark === "active"} />
          {mark === "apple" && <Glyph><AppleMark /></Glyph>}
          {mark === "mail" && <Glyph><MailMark /></Glyph>}
          <TabText $w={w}>{text}</TabText>
          {mark === "active" && <Glyph><svg width="16" height="16" viewBox="0 0 16 16"><path d="M2 2l12 12M14 2L2 14" stroke="#555" strokeWidth="3" /></svg></Glyph>}
        </Tab>
      ))}
      <svg width="110" height="49" viewBox="0 0 110 49">
        <path d="M0 14q-3-6 3-6h44q7 0 9 6l7 20q2 6-4 6H20q-8 0-10-6z" transform="translate(-4 0)" fill="#ebebeb" stroke="#b0b0b0" />
        <g transform="translate(66 -4)" fill="#a8a8a8"><path d="M28 1v15l-5-5-4 4-5-5 4-4-5-5z" /><path d="M0 29V14l5 5 4-4 5 5-4 4 5 5z" /></g>
      </svg>
    </TabStrip>
    <UrlRow>
      <UrlBox>
        <UrlInput aria-label="Address" />
        <svg width="38" height="36" viewBox="0 0 38 36"><path d="M19 2l5 12 12 1-9 8 3 12-11-7-11 7 3-12-9-8 12-1z" fill="#fff" stroke="#666" strokeWidth="2" strokeLinejoin="round" /></svg>
      </UrlBox>
      <svg width="30" height="26" viewBox="0 0 30 26"><path d="M3 3h24M3 13h24M3 23h24" stroke="#7c7c7c" strokeWidth="5" strokeLinecap="round" /></svg>
    </UrlRow>
  </ChromeFrame>
);

export default function App() {
  return (
    <Desktop>
      <GlobalStyle />
      <Stars width="22" height="120" viewBox="0 0 22 120">
        <circle cx="16" cy="49" r="2.500" fill="#d8ecff" />
        <g fill="#4c6888"><circle cx="9" cy="57" r="2" /><circle cx="17" cy="59" r="2" /><circle cx="7" cy="64" r="2" /><circle cx="10" cy="93" r="2" /></g>
      </Stars>
      <MoviesWindow />
      <AboutFrame><AboutTitle>About This Mac</AboutTitle></AboutFrame>
      <ChromeWindow />
      <ColumnBrowser />
      <KindDrawer />
      <InventoryWindow />
    </Desktop>
  );
}
